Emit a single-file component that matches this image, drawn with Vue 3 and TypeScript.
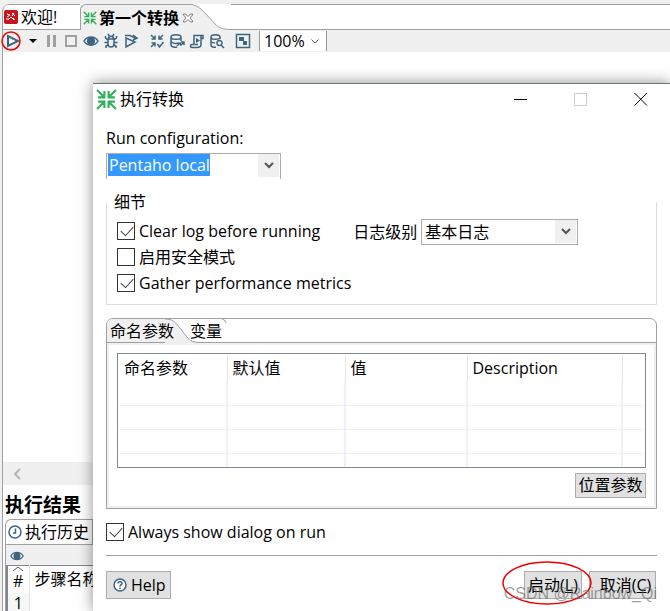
<script setup lang="ts">
import { ref } from 'vue'

interface Shape { d: string; fill?: boolean }
interface Tool { label: string; tone?: string; gap?: boolean; shapes: Shape[] }

const tools: Tool[] = [
  { label: '暂停', tone: 'muted', shapes: [{ d: 'M4 2h3v12H4zM10 2h3v12h-3z', fill: true }] },
  { label: '停止', tone: 'muted', shapes: [{ d: 'M3 3h10v10H3z' }] },
  { label: '预览', shapes: [{ d: 'M1 8C4 2.500 12 2.500 15 8C12 13.500 4 13.500 1 8z' }, { d: 'M4 8a4 4 0 1 0 8 0a4 4 0 1 0-8 0z', fill: true }] },
  { label: '调试', shapes: [{ d: 'M5 6h6v5c0 4-6 4-6 0zM5.500 5.500c0-3 5-3 5 0M5 1L6.500 3.500M11 1L9.500 3.500M5 7L2.500 5V3M11 7l2.500-2V3M5 9.500H1.500M11 9.500h3.500M5 12l-2 1v2M11 12l2 1v2' }] },
  { label: '重放', shapes: [{ d: 'M3 5v9l9-5L3 5zM2 2.500h6M7 2.500l5 2.500M10 2l4 3-4 2' }] },
  { label: '校验', gap: true, shapes: [{ d: 'M2 2l4 4M6 2.500V6H2.500M14 2l-4 4M10 2.500V6h3.500M2 14l4-4M2.500 10H6v3.500M8.500 11l2 3 4-5' }] },
  { label: '影响分析', shapes: [{ d: 'M2 4c0-3 10-3 10 0s-10 3-10 0v8c0 2 4 2.500 6 2M2 8c0 2 4 3 8 2M12 4v4M8 13l3-3 1 2 3-3M12 9h3v3' }] },
  { label: 'SQL', shapes: [{ d: 'M5 2.500h9v3h-2v6c0 3-2 3-4 3H3c-2 0-2-3 0-3h2zM5 2.500v9M12 5.500V3M6 11.500h3' }, { d: 'M7 5l4 2.500L7 10z', fill: true }] },
  { label: '浏览数据库', shapes: [{ d: 'M2 4c0-3 9-3 9 0s-9 3-9 0v8c0 2 3 2.500 5 2M2 8c0 1 2 2 4 2M11 4v2M8 10a2.500 2.500 0 1 0 5 0a2.500 2.500 0 1 0-5 0M12 12l3 3' }] },
  { label: '结果面板', gap: true, shapes: [{ d: 'M1.500 1.500h13v13h-13z' }, { d: 'M4 4h5v4H4zM8 8h4v4H8z', fill: true }] },
]

const columns = ['命名参数', '默认值', '值', 'Description', '']
const configuration = ref('Pentaho local')
const clearLog = ref(true)
const safeMode = ref(false)
const metrics = ref(true)
const always = ref(true)
const level = ref('基本日志')
const zoom = ref('100%')
</script>

<template>
  <main class="app">
    <nav class="tabs">
      <button class="tab welcome">
        <svg class="i14" viewBox="0 0 14 14"><rect width="14" height="14" rx="2" fill="#c4161c" /><path d="M3 4l3 1-3 2M4 10l3-3 3 3M8 3l3 3M10 3L8 6M2 9h3M9 8l2 2" fill="none" stroke="#fff" /></svg>
        <span>欢迎!</span>
      </button>
      <button class="tab current">
        <svg class="i14" viewBox="0 0 20 20"><path class="green" d="M1 1l6 6M8 2v6H2M19 1l-6 6M12 2v6h6M1 19l6-6M2 12h6v6M19 19l-6-6M18 12h-6v6" /></svg>
        <b>第一个转换</b>
        <svg class="close" viewBox="0 0 10 10"><path d="M.5 1h2L5 3.500 7.500 1h2v1L7 5l2.500 3v1h-2L5 6.500 2.500 9h-2V8L3 5 .5 2z" fill="#fff" stroke="#777" /></svg>
      </button>
      <svg class="curve" viewBox="0 0 44 26"><path d="M0 0C10 0 13 4 19 10L28 20C32 24 36 25.500 44 25.500V26H0z" fill="#f0f0f0" /><path d="M0 .5C10 .5 13 4 19 10L28 20C32 24 36 25.500 44 25.500" fill="none" stroke="#a0a0a0" /></svg>
      <span class="rest"></span>
    </nav>

    <div class="toolbar">
      <button class="tool run" aria-label="运行">
        <svg viewBox="0 0 22 20"><path d="M7 5v10l10-5z" fill="#fff" stroke="#3d6480" stroke-width="2" /><ellipse cx="10" cy="10" rx="9" ry="9" fill="none" stroke="#f00000" stroke-width="1.500" /></svg>
      </button>
      <button class="tool drop" aria-label="运行选项"><svg viewBox="0 0 8 4"><path d="M0 0h8L4 4z" fill="#000" /></svg></button>
      <button v-for="t in tools" :key="t.label" class="tool" :class="[t.tone, { gap: t.gap }]" :aria-label="t.label">
        <svg class="i16" viewBox="0 0 16 16"><path v-for="s in t.shapes" :key="s.d" :d="s.d" :class="s.fill ? 'solid' : 'line'" /></svg>
      </button>
      <span class="zoom">
        <select v-model="zoom" aria-label="缩放"><option>100%</option></select>
        <svg class="thin" viewBox="0 0 8 5"><path d="M.5 .5L4 4l3.500-3.500" fill="none" stroke="#555" /></svg>
      </span>
    </div>

    <section class="canvas"></section>
    <div class="scroll"><svg viewBox="0 0 8 12"><path d="M7 1L2 6l5 5" fill="none" stroke="#b4b4b4" stroke-width="2" /></svg></div>
    <section class="results">
      <h2>执行结果</h2>
      <div class="history">
        <button class="history-tab">
          <svg class="i14" viewBox="0 0 14 14"><circle cx="7" cy="7" r="6" fill="#fff" stroke="#3d6480" stroke-width="1.500" /><path d="M7.500 3.500V8H5" fill="none" stroke="#3d6480" stroke-width="1.500" /></svg>
          <span>执行历史</span>
        </button>
        <div class="history-tools"><svg class="i14" viewBox="0 0 16 16"><path class="line" d="M1 8C4 2.500 12 2.500 15 8C12 13.500 4 13.500 1 8z" /><path class="solid" d="M4 8a4 4 0 1 0 8 0a4 4 0 1 0-8 0z" /></svg></div>
        <table class="steps">
          <thead><tr><th class="num"><svg viewBox="0 0 10 4"><path d="M0 4l5-4 5 4" fill="none" stroke="#555" /></svg>#</th><th>步骤名称</th></tr></thead>
          <tbody><tr><td class="num">1</td><td></td></tr></tbody>
        </table>
      </div>
    </section>

    <section class="dialog" role="dialog" aria-labelledby="dialog-title">
      <header class="titlebar">
        <svg class="logo" viewBox="0 0 20 20"><path class="green" d="M1 1l6 6M8 2v6H2M19 1l-6 6M12 2v6h6M1 19l6-6M2 12h6v6M19 19l-6-6M18 12h-6v6" /></svg>
        <span id="dialog-title">执行转换</span>
        <div class="window-buttons">
          <button aria-label="最小化"><svg viewBox="0 0 14 14"><path d="M0 7.500h13" stroke="#000" /></svg></button>
          <button aria-label="最大化" disabled><svg viewBox="0 0 14 14"><path d="M.5 1.500h12v12H.5z" fill="none" stroke="#ccc" /></svg></button>
          <button aria-label="关闭"><svg viewBox="0 0 14 14"><path d="M.5 1l12.500 12.500M13 1L.5 13.500" stroke="#000" /></svg></button>
        </div>
      </header>

      <div class="body">
        <label class="config-label" for="configuration">Run configuration:</label>
        <div class="combo config">
          <input id="configuration" v-model="configuration" type="text" />
          <button class="arrow" aria-label="选择配置"><svg viewBox="0 0 10 7"><path d="M1 1l4 4 4-4" /></svg></button>
        </div>

        <fieldset class="details">
          <legend>细节</legend>
          <div class="options">
            <div class="checks">
              <label class="check"><input v-model="clearLog" type="checkbox" />Clear log before running</label>
              <label class="check"><input v-model="safeMode" type="checkbox" />启用安全模式</label>
              <label class="check"><input v-model="metrics" type="checkbox" />Gather performance metrics</label>
            </div>
            <label class="level">日志级别
              <span class="combo">
                <select v-model="level"><option>基本日志</option></select>
                <span class="arrow"><svg viewBox="0 0 10 7"><path d="M1 1l4 4 4-4" /></svg></span>
              </span>
            </label>
          </div>
        </fieldset>

        <div class="folder">
          <div class="folder-tabs">
            <button class="folder-tab selected">命名参数</button>
            <svg class="bend" viewBox="0 0 36 24"><path d="M0 0C8 0 10 3 14 8L22 18C25 22 28 23.500 36 23.500V24H0z" fill="#f0f0f0" /><path d="M0 0C8 0 10 3 14 8L22 18C25 22 28 23.500 36 23.500" fill="none" stroke="#a0a0a0" /></svg>
            <button class="folder-tab other">变量</button>
            <svg class="tick" viewBox="0 0 5 4"><path d="M0 0q3 0 4 4" fill="none" stroke="#a0a0a0" /></svg>
          </div>
          <div class="folder-body">
            <div class="grid">
              <table>
                <colgroup><col class="c1" /><col class="c2" /><col class="c3" /><col class="c4" /><col class="c5" /></colgroup>
                <thead><tr><th v-for="(c, i) in columns" :key="i">{{ c }}</th></tr></thead>
                <tbody><tr v-for="r in 4" :key="r"><td v-for="c in 5" :key="c"></td></tr></tbody>
              </table>
            </div>
            <button class="push position">位置参数</button>
          </div>
        </div>

        <label class="check always"><input v-model="always" type="checkbox" />Always show dialog on run</label>
        <footer class="footer">
          <button class="push help">
            <svg class="i14" viewBox="0 0 14 14"><circle cx="7" cy="7" r="6" fill="#fff" stroke="#3d6480" stroke-width="1.500" /><path d="M5 5.500c0-2.500 4-2.500 4 0C9 7 7 6.500 7 8.500M7 9.500V11" fill="none" stroke="#3d6480" stroke-width="1.500" /></svg>
            Help
          </button>
          <div class="actions">
            <button class="push start">启动(<u>L</u>)</button>
            <button class="push cancel">取消(<u>C</u>)</button>
          </div>
          <svg class="ring" viewBox="0 0 90 44"><ellipse cx="45" cy="22" rx="44" ry="21" fill="none" stroke="#f00000" stroke-width="1.500" /></svg>
          <span class="mark">CSDN @Rainbow_Qi</span>
        </footer>
      </div>
    </section>
  </main>
</template>

<style>
body { margin: 0; background: #fff; }
</style>

<style scoped>
* { box-sizing: border-box; }
.app {
  position: relative;
  display: flex;
  flex-direction: column;
  height: 100vh;
  overflow: hidden;
  padding: 4px 0 0 2px;
  background: #f0f0f0;
  color: #000;
  font: 16px/22px "Open Sans", "Noto Sans CJK SC", sans-serif;
}
button, input, select { margin: 0; padding: 0; border: 0; border-radius: 0; background: none; color: inherit; font: inherit; }
svg { display: block; flex: none; }
.i14 { width: 14px; height: 14px; }
.i16 { width: 16px; height: 16px; }
.green { fill: none; stroke: #2fb15a; stroke-width: 2; }
.line { fill: none; stroke: #3d6480; stroke-width: 1.500; }
.solid { fill: #3d6480; }
.muted .line { stroke: #a0a0a0; stroke-width: 2; }
.muted .solid { fill: #a0a0a0; }

.tabs { display: flex; flex: none; height: 26px; border-left: 1px solid #a0a0a0; border-radius: 8px 0 0 0; background: #fff; overflow: hidden; }
.tab { display: flex; align-items: center; white-space: nowrap; border-top: 1px solid #a0a0a0; }
.welcome { width: 77px; gap: 3px; padding-left: 1px; border-bottom: 1px solid #a0a0a0; }
.current { z-index: 1; gap: 2px; padding-left: 2px; border-left: 1px solid #a0a0a0; border-radius: 6px 0 0 0; background: #f0f0f0; }
.close { width: 10px; height: 10px; margin-left: 2px; }
.curve { width: 44px; height: 26px; margin-left: -6px; }
.rest { flex: 1; border-top: 1px solid #a0a0a0; border-bottom: 1px solid #a0a0a0; }

.toolbar { display: flex; flex: none; align-items: center; gap: 4px; height: 22px; border-left: 1px solid #a0a0a0; }
.tool.run { width: 22px; margin-left: -2px; }
.run svg { width: 22px; height: 20px; }
.drop { width: 8px; margin: 0 2px; }
.drop svg { width: 8px; height: 4px; }
.gap { margin-left: 6px; }
.zoom { display: flex; position: relative; width: 68px; height: 20px; margin-left: 4px; border: solid #999; border-width: 0 1px; background: #fff; }
.zoom select { width: 100%; padding-left: 4px; appearance: none; line-height: 20px; }
.thin { position: absolute; right: 7px; top: 8px; width: 8px; height: 5px; }

.canvas { flex: 1; border-left: 1px solid #a0a0a0; background: #fff; }
.scroll { flex: none; height: 23px; padding: 6px 10px; border-left: 1px solid #a0a0a0; }
.scroll svg { width: 8px; height: 12px; }
.results { flex: none; height: 126px; padding: 6px 0 0 2px; overflow: hidden; border-left: 1px solid #a0a0a0; background: #fff; }
h2 { margin: 0; font-size: 19px; line-height: 28px; }
.history { border: solid #a0a0a0; border-width: 1px 0 0 1px; border-radius: 6px 0 0 0; overflow: hidden; }
.history-tab { display: flex; align-items: center; gap: 3px; width: 87px; height: 24px; padding-left: 2px; border-right: 1px solid #a0a0a0; white-space: nowrap; }
.history-tools { height: 21px; padding: 4px; border-top: 1px solid #a0a0a0; background: #f0f0f0; }
.steps { width: 100%; border-collapse: collapse; border: solid #828790; border-width: 1px 0 0 2px; }
.steps th { height: 27px; padding: 0 0 0 5px; font-weight: 400; text-align: left; }
.steps .num { width: 22px; padding: 0; border-right: 1px solid #e5e5e5; text-align: center; line-height: 20px; }
.steps td { height: 20px; }
.steps td.num { background: #f7f7f7; }
.num svg { width: 10px; height: 4px; margin: 0 auto; }

.dialog { position: absolute; inset: 83px 0 0 93px; display: flex; flex-direction: column; border-top: 1px solid #64786f; background: #fff; box-shadow: 0 0 14px rgba(0, 0, 0, .45); }
.titlebar { display: flex; align-items: center; gap: 3px; height: 30px; padding: 0 22px 0 3px; }
.logo { width: 21px; height: 21px; }
.window-buttons { display: flex; gap: 46px; margin-left: auto; }
.window-buttons svg { width: 14px; height: 14px; }
.body { display: flex; flex-direction: column; padding: 13px 13px 0; }
.config-label { align-self: flex-start; line-height: 22px; }
.combo { display: flex; position: relative; height: 26px; border: 1px solid #acacac; background: #fff; }
.config { width: 175px; margin-top: 4px; padding: 0 1px; border-bottom: 0; }
.config input { width: 102px; height: 22px; padding-left: 1px; background: #3399ff; color: #fff; }
.arrow { display: flex; align-items: center; justify-content: center; width: 21px; height: 23px; margin-left: auto; background: #f0f0f0; }
.arrow svg { width: 10px; height: 7px; }
.arrow path { fill: none; stroke: #555; stroke-width: 2; }

.details { min-width: 0; height: 114px; margin: 12px 0 0; padding: 7px 10px 0; border: 1px solid #dcdcdc; border-top-color: transparent; }
.details legend { margin-left: -5px; padding: 0 2px; line-height: 22px; }
.options { display: flex; gap: 2px; }
.checks { display: flex; flex-direction: column; gap: 4px; }
.check { display: flex; align-items: center; gap: 4px; line-height: 22px; white-space: nowrap; }
.check input { position: relative; flex: none; width: 18px; height: 18px; appearance: none; border: 1px solid #333; background: #fff; }
.check input:checked::after { content: ""; position: absolute; left: 3px; top: 3px; width: 11px; height: 6px; border: solid #444; border-width: 0 0 1px 1px; transform: rotate(-48deg); }
.level { display: flex; align-items: center; gap: 4px; height: 24px; white-space: nowrap; }
.level .combo { width: 157px; }
.level select { width: 100%; padding-left: 3px; appearance: none; }
.level .arrow { position: absolute; right: 1px; top: 0; pointer-events: none; }

.folder { margin-top: 13px; border: 1px solid #a0a0a0; border-radius: 7px 7px 0 0; overflow: hidden; }
.folder-tabs { display: flex; height: 24px; border-bottom: 1px solid #a0a0a0; }
.folder-tab { line-height: 24px; white-space: nowrap; }
.selected { width: 58px; padding-left: 3px; background: #f0f0f0; text-align: left; position: relative; z-index: 1; }
.bend { width: 36px; height: 24px; }
.other { margin-left: -11px; z-index: 1; }
.tick { width: 5px; height: 4px; }
.folder-body { display: flex; flex-direction: column; padding: 8px; border: 2px solid #f0f0f0; }
.grid { height: 115px; padding: 1px; overflow: hidden; border: 1px solid #828790; }
.grid table { width: 100%; table-layout: fixed; border-collapse: collapse; }
.c1 { width: 108px; }
.c2 { width: 118px; }
.c3 { width: 122px; }
.c4 { width: 155px; }
.grid th { height: 26px; padding: 0 0 0 5px; border-right: 1px solid #e5e5e5; font-weight: 400; text-align: left; line-height: 24px; }
.grid td { height: 24px; padding: 0; border-right: 2px solid #edf1f9; border-bottom: 1px solid #f0f0f0; }
.grid th:last-child, .grid td:last-child { border-right: 0; }
.push { border: 1px solid #adadad; background: #e1e1e1; white-space: nowrap; }
.position { align-self: flex-end; width: 71px; height: 25px; margin-top: 5px; line-height: 23px; }
.always { align-self: flex-start; margin-top: 12px; }
.footer { position: relative; display: flex; justify-content: space-between; margin-top: 12px; padding-top: 15px; border-top: 1px solid #a0a0a0; }
.help { display: flex; align-items: center; gap: 4px; width: 65px; height: 28px; padding-left: 6px; }
.actions { display: flex; gap: 7px; padding-right: 1px; }
.actions .push { height: 28px; }
.start { width: 58px; }
.cancel { width: 67px; padding-left: 6px; }
.ring { position: absolute; right: 65px; top: 5px; width: 90px; height: 44px; }
.mark { position: absolute; right: 0; top: 27px; color: rgba(100, 100, 100, .6); font: 16px/22px "Liberation Sans", sans-serif; white-space: nowrap; }
</style>
